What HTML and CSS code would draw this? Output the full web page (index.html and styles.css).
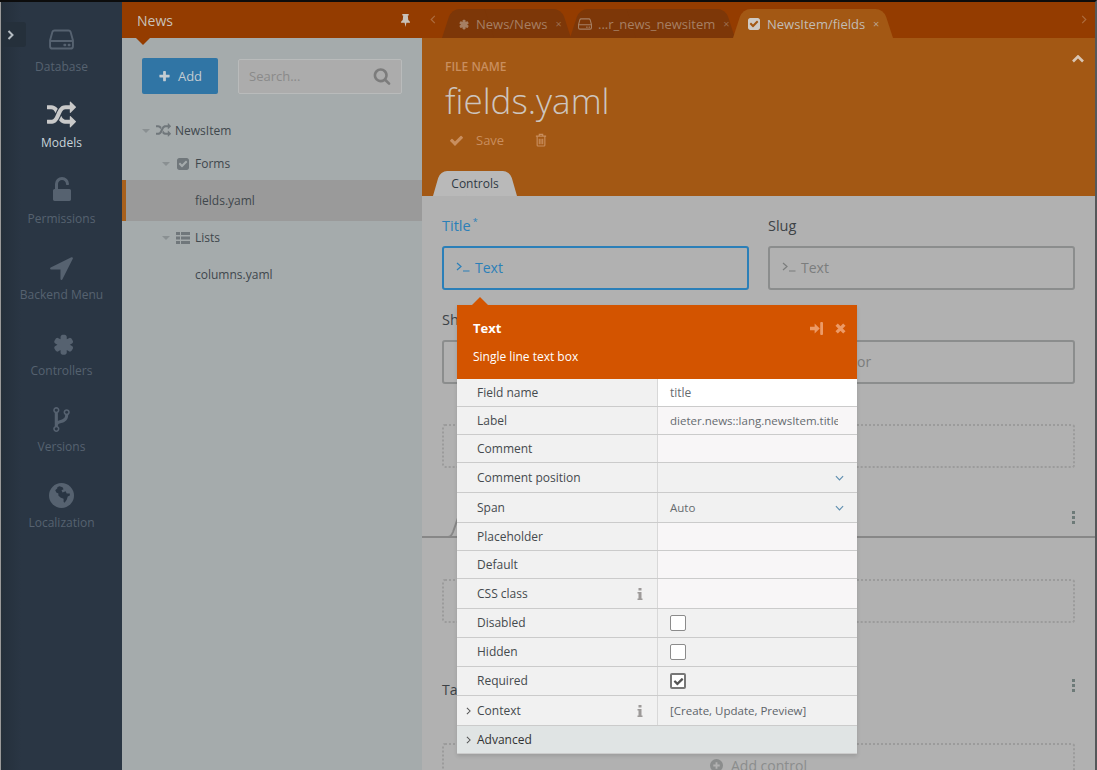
FILE: index.html
```html
<!DOCTYPE HTML>
<html>
<head>
  <meta charset="UTF-8">
  <title>Builder</title>
  <link rel="stylesheet" href="styles.css">
</head>
<body>
<svg class="defs" width="0" height="0">
  <symbol id="i-shuffle" viewBox="0 0 1792 1792"><path d="M666 481q-60 92-137 273-22-45-37-72.5t-40.5-63.5-51-56.5-63-35-81.5-14.5h-224q-14 0-23-9t-9-23v-192q0-14 9-23t23-9h224q250 0 410 225zm1126 799q0 14-9 23l-320 320q-9 9-23 9-13 0-22.5-9.5t-9.5-22.5v-192q-32 0-85 .5t-81 1-73-1-71-5-64-10.5-63-18.5-58-28.5-59-40-55-53.5-56-69.5q59-93 136-273 22 45 37 72.5t40.5 63.5 51 56.5 63 35 81.5 14.5h256v-192q0-14 9-23t23-9q12 0 24 10l319 319q9 9 9 23zm0-896q0 14-9 23l-320 320q-9 9-23 9-13 0-22.5-9.5t-9.5-22.5v-192h-256q-48 0-87 15t-69 45-51 61-45 77q-32 62-78 171-29 66-49.5 111t-54 105-64 100-74 83-90 68.5-106.5 42-128 16.5h-224q-14 0-23-9t-9-23v-192q0-14 9-23t23-9h224q48 0 87-15t69-45 51-61 45-77q32-62 78-171 29-66 49.5-111t54-105 64-100 74-83 90-68.5 106.5-42 128-16.5h256v-192q0-14 9-23t23-9q12 0 24 10l319 319q9 9 9 23z"/></symbol>
  <symbol id="i-checkbox" viewBox="0 0 1792 1792"><path d="M813 1299l614-614q19-19 19-45t-19-45l-102-102q-19-19-45-19t-45 19l-467 467-211-211q-19-19-45-19t-45 19l-102 102q-19 19-19 45t19 45l358 358q19 19 45 19t45-19zm851-883v960q0 119-84.5 203.5t-203.5 84.5h-960q-119 0-203.5-84.5t-84.5-203.5v-960q0-119 84.5-203.5t203.5-84.5h960q119 0 203.5 84.5t84.5 203.5z"/></symbol>
  <symbol id="i-check" viewBox="0 0 1792 1792"><path d="M1671 566q0 40-28 68l-724 724-136 136q-28 28-68 28t-68-28l-136-136-362-362q-28-28-28-68t28-68l136-136q28-28 68-28t68 28l294 295 656-657q28-28 68-28t68 28l136 136q28 28 28 68z"/></symbol>
  <symbol id="i-search" viewBox="0 0 1792 1792"><path d="M1216 832q0-185-131.5-316.5t-316.5-131.5-316.5 131.5-131.5 316.5 131.5 316.5 316.5 131.5 316.5-131.5 131.5-316.5zm512 832q0 52-38 90t-90 38q-54 0-90-38l-343-342q-179 124-399 124-143 0-273.5-55.5t-225-150-150-225-55.5-273.5 55.5-273.5 150-225 225-150 273.5-55.5 273.5 55.5 225 150 150 225 55.5 273.5q0 220-124 399l343 343q37 37 37 90z"/></symbol>
  <symbol id="i-plus" viewBox="0 0 1792 1792"><path d="M1600 736v192q0 40-28 68t-68 28h-416v416q0 40-28 68t-68 28h-192q-40 0-68-28t-28-68v-416h-416q-40 0-68-28t-28-68v-192q0-40 28-68t68-28h416v-416q0-40 28-68t68-28h192q40 0 68 28t28 68v416h416q40 0 68 28t28 68z"/></symbol>
  <symbol id="i-asterisk" viewBox="0 0 1792 1792"><path d="M1546 1050q46 26 59.5 77.5t-12.5 97.5l-64 110q-26 46-77.5 59.5t-97.5-12.5l-133-77v154q0 52-38 90t-90 38h-128q-52 0-90-38t-38-90v-154l-133 77q-46 26-97.5 12.5t-77.5-59.5l-64-110q-26-46-12.5-97.5t59.5-77.5l133-77-133-77q-46-26-59.5-77.5t12.5-97.5l64-110q26-46 77.5-59.5t97.5 12.5l133 77v-154q0-52 38-90t90-38h128q52 0 90 38t38 90v154l133-77q46-26 97.5-12.5t77.5 59.5l64 110q26 46 12.5 97.5t-59.5 77.5l-133 77z"/></symbol>
  <symbol id="i-arrow" viewBox="0 0 1792 1792"><path d="M1593 349l-640 1280q-17 35-57 35-5 0-15-2-22-5-35.5-22.5t-13.5-39.5v-576h-576q-22 0-39.5-13.5t-22.5-35.5 4-42 29-30l1280-640q13-7 29-7 27 0 45 19 15 14 18.5 34.5t-6.5 39.5z"/></symbol>
  <symbol id="i-unlock" viewBox="0 0 1792 1792"><path d="M1376 768q40 0 68 28t28 68v576q0 40-28 68t-68 28h-960q-40 0-68-28t-28-68v-576q0-40 28-68t68-28h32v-320q0-185 131.5-316.5t316.5-131.5 316.5 131.5 131.5 316.5q0 26-19 45t-45 19h-64q-26 0-45-19t-19-45q0-106-75-181t-181-75-181 75-75 181v320h736z"/></symbol>
  <symbol id="i-fork" viewBox="0 0 1792 1792"><path d="M672 1472q0-40-28-68t-68-28-68 28-28 68 28 68 68 28 68-28 28-68zm0-1152q0-40-28-68t-68-28-68 28-28 68 28 68 68 28 68-28 28-68zm640 128q0-40-28-68t-68-28-68 28-28 68 28 68 68 28 68-28 28-68zm96 0q0 52-26 96.500t-70 69.500q-2 287-226 414-67 38-203 81-128 40-169.500 71t-41.500 100v26q44 25 70 69.500t26 96.500q0 80-56 136t-136 56-136-56-56-136q0-52 26-96.500t70-69.500v-820q-44-25-70-69.500t-26-96.500q0-80 56-136t136-56 136 56 56 136q0 52-26 96.500t-70 69.500v497q54-26 154-57 55-17 87.500-29.500t70.500-31 59-39.500 40.500-51 28-69.500 8.500-91.500q-44-25-70-69.500t-26-96.500q0-80 56-136t136-56 136 56 56 136z"/></symbol>
  <symbol id="i-hdd" viewBox="0 0 26 22"><path d="M5.500 1.500h15q1.400 0 2 1.500l2.500 9v6q0 2.500-2.500 2.500h-19q-2.500 0-2.500-2.500v-6l2.500-9q.6-1.500 2-1.500zM1.500 12.500h23" fill="none" stroke="currentColor" stroke-width="2"/><rect x="15" y="15.500" width="3" height="2.500" rx="1"/><rect x="19.500" y="15.500" width="3" height="2.500" rx="1"/></symbol>
  <symbol id="i-globe" viewBox="0 0 24 24"><circle cx="12" cy="12" r="12"/><path class="globe-land" d="M8 4l2-1 3 1 1 2-2 1 1 2 3-1 1 2 3 0 0 2-2 1-1 3-2 3-1-1 0-3-3-1-2-2 0-2-2-1-1-2 2-2z"/></symbol>
  <symbol id="i-trash" viewBox="0 0 14 16"><path d="M1 3.500h12M5 3V1.500h4V3M2.500 4v10q0 1 1 1h7q1 0 1-1V4M5 6.500V13M7 6.500V13M9 6.500V13" fill="none" stroke="currentColor" stroke-width="1.300"/></symbol>
  <symbol id="i-pin" viewBox="0 0 12 14"><path d="M2.500 0h7v1.500H8.500L9 6.500q2 1 2 3H7L6 14 5 9.500H1q0-2 2-3l.5-5h-1z"/></symbol>
  <symbol id="i-list" viewBox="0 0 14 12"><path d="M0 0h4v3H0zM5 0h9v3H5zM0 4.500h4v3H0zM5 4.500h9v3H5zM0 9h4v3H0zM5 9h9v3H5z"/></symbol>
  <symbol id="i-prompt" viewBox="0 0 14 10"><path d="M1 1l4 3.500-4 3.500M7 9h6.500" fill="none" stroke="currentColor" stroke-width="1.200"/></symbol>
  <symbol id="i-signin" viewBox="0 0 14 14"><path d="M0 5h5V1.500L10.500 7 5 12.500V9H0z"/><rect x="11" y="0" width="3" height="14" rx="1"/></symbol>
  <symbol id="i-close" viewBox="0 0 10 10"><path d="M1.500 1.500l7 7M8.500 1.500l-7 7" fill="none" stroke="currentColor" stroke-width="3"/></symbol>
  <symbol id="i-info" viewBox="0 0 6 12"><path d="M1.500 0h3v2.500h-3zM.5 4h4v6.500h1V12H.5v-1.500h1V5.500h-1z"/></symbol>
  <symbol id="i-right" viewBox="0 0 6 10"><path d="M1 1l4 4-4 4" fill="none" stroke="currentColor"/></symbol>
  <symbol id="i-down" viewBox="0 0 10 6"><path d="M1 1l4 4 4-4" fill="none" stroke="currentColor"/></symbol>
  <symbol id="i-up" viewBox="0 0 12 8"><path d="M1 6.500l5-5 5 5" fill="none" stroke="currentColor" stroke-width="2.600"/></symbol>
  <symbol id="i-addcircle" viewBox="0 0 14 14"><path fill-rule="evenodd" d="M7 0a7 7 0 1 0 0 14A7 7 0 0 0 7 0zM6 3.500h2V6h2.500v2H8v2.500H6V8H3.500V6H6z"/></symbol>
</svg>

<div class="app">
  <nav class="sidebar">
    <button class="side-toggle"><svg class="ic"><use href="#i-right"/></svg></button>
    <a class="nav-item"><span class="nav-icon"><svg class="ic hdd"><use href="#i-hdd"/></svg></span>Database</a>
    <a class="nav-item active"><span class="nav-icon"><svg class="ic big"><use href="#i-shuffle"/></svg></span>Models</a>
    <a class="nav-item"><span class="nav-icon"><svg class="ic lock"><use href="#i-unlock"/></svg></span>Permissions</a>
    <a class="nav-item"><span class="nav-icon"><svg class="ic big"><use href="#i-arrow"/></svg></span>Backend Menu</a>
    <a class="nav-item"><span class="nav-icon"><svg class="ic big"><use href="#i-asterisk"/></svg></span>Controllers</a>
    <a class="nav-item"><span class="nav-icon"><svg class="ic big"><use href="#i-fork"/></svg></span>Versions</a>
    <a class="nav-item"><span class="nav-icon"><svg class="ic globe"><use href="#i-globe"/></svg></span>Localization</a>
  </nav>

  <aside class="panel">
    <header class="panel-head">
      <span>News</span>
      <svg class="ic pin"><use href="#i-pin"/></svg>
    </header>
    <div class="panel-tools">
      <button class="btn-add"><svg class="ic plus"><use href="#i-plus"/></svg>Add</button>
      <div class="search"><span>Search...</span><svg class="ic mag"><use href="#i-search"/></svg></div>
    </div>
    <ul class="tree">
      <li class="node lvl1"><i class="caret"></i><svg class="ic tree-shuffle"><use href="#i-shuffle"/></svg>NewsItem</li>
      <li class="node lvl2"><i class="caret"></i><svg class="ic tree-box"><use href="#i-checkbox"/></svg>Forms</li>
      <li class="node leaf selected">fields.yaml</li>
      <li class="node lvl2"><i class="caret"></i><svg class="ic tree-list"><use href="#i-list"/></svg>Lists</li>
      <li class="node leaf">columns.yaml</li>
    </ul>
  </aside>

  <main class="main">
    <div class="tabbar">
      <svg class="ic tab-nav"><use href="#i-right"/></svg>
      <div class="tabs">
        <div class="tab tab-one"><svg class="ic tab-icon"><use href="#i-asterisk"/></svg>News/News<span class="tab-x">×</span></div>
        <div class="tab tab-two"><svg class="ic tab-hdd"><use href="#i-hdd"/></svg>...r_news_newsitem<span class="tab-x">×</span></div>
        <div class="tab tab-three current"><svg class="ic tab-icon"><use href="#i-checkbox"/></svg>NewsItem/fields<span class="tab-x">×</span></div>
      </div>
      <svg class="ic tab-nav next"><use href="#i-right"/></svg>
    </div>

    <section class="file-head">
      <div class="file-top">
        <div>
          <div class="file-label">FILE NAME</div>
          <div class="file-name">fields.yaml</div>
        </div>
        <svg class="ic collapse"><use href="#i-up"/></svg>
      </div>
      <div class="file-actions">
        <span class="save"><svg class="ic act-check"><use href="#i-check"/></svg>Save</span>
        <svg class="ic act-trash"><use href="#i-trash"/></svg>
      </div>
      <div class="file-tab">Controls</div>
    </section>

    <section class="form">
      <div class="field-row">
        <div class="field">
          <label class="active">Title<sup>*</sup></label>
          <div class="control active"><svg class="ic prompt"><use href="#i-prompt"/></svg>Text</div>
        </div>
        <div class="field">
          <label>Slug</label>
          <div class="control"><svg class="ic prompt"><use href="#i-prompt"/></svg>Text</div>
        </div>
      </div>
      <div class="field-row second">
        <div class="field">
          <label>Sh</label>
          <div class="control"></div>
        </div>
        <div class="field">
          <label>&nbsp;</label>
          <div class="control"><svg class="ic prompt"><use href="#i-prompt"/></svg>Rich editor</div>
        </div>
      </div>
      <div class="dropzone first"></div>
      <div class="tabline">
        <svg class="curve" width="14" height="24" viewBox="0 0 14 24"><path d="M0 23h3q3 0 5-5L14 1" fill="none" stroke="#878787" stroke-width="2"/></svg>
        <span class="dots"><i></i><i></i><i></i></span>
      </div>
      <div class="dropzone second"></div>
      <div class="tab-label-row"><span class="tab-label">Ta</span><span class="dots"><i></i><i></i><i></i></span></div>
      <div class="dropzone last"><svg class="ic add-ic"><use href="#i-addcircle"/></svg>Add control</div>
    </section>
  </main>
</div>

<div class="popup">
  <div class="popup-head">
    <div class="popup-title">
      <b>Text</b>
      <span class="popup-icons"><svg class="ic signin"><use href="#i-signin"/></svg><svg class="ic pop-x"><use href="#i-close"/></svg></span>
    </div>
    <p>Single line text box</p>
  </div>
  <div class="row"><div class="key">Field name</div><div class="val focus">title</div></div>
  <div class="row"><div class="key">Label</div><div class="val"><span class="clip">dieter.news::lang.newsItem.title</span></div></div>
  <div class="row"><div class="key">Comment</div><div class="val"></div></div>
  <div class="row h30"><div class="key">Comment position</div><div class="val sel"><span></span><svg class="ic down"><use href="#i-down"/></svg></div></div>
  <div class="row h30"><div class="key">Span</div><div class="val sel"><span>Auto</span><svg class="ic down"><use href="#i-down"/></svg></div></div>
  <div class="row"><div class="key">Placeholder</div><div class="val"></div></div>
  <div class="row"><div class="key">Default</div><div class="val"></div></div>
  <div class="row h30"><div class="key">CSS class<svg class="ic info"><use href="#i-info"/></svg></div><div class="val"></div></div>
  <div class="row h29"><div class="key">Disabled</div><div class="val sel"><i class="box"></i></div></div>
  <div class="row h29"><div class="key">Hidden</div><div class="val sel"><i class="box"></i></div></div>
  <div class="row h29"><div class="key">Required</div><div class="val sel"><i class="box on"><svg class="ic"><use href="#i-check"/></svg></i></div></div>
  <div class="row h30"><div class="key"><svg class="ic expand"><use href="#i-right"/></svg>Context<svg class="ic info"><use href="#i-info"/></svg></div><div class="val sel ctx">[Create, Update, Preview]</div></div>
  <div class="row group"><div class="key"><svg class="ic expand"><use href="#i-right"/></svg>Advanced</div></div>
</div>
</body>
</html>
```

FILE: styles.css
```css
* { box-sizing: border-box; }
html, body { margin: 0; height: 100%; overflow: hidden; }
body { font-family: "Open Sans", sans-serif; font-size: 12px; color: #3d4246; background: #b1b1b1; }
ul { list-style: none; margin: 0; padding: 0; }
.defs { position: absolute; }
.ic { fill: currentColor; display: inline-block; flex: none; stroke-width: 1.300; }
.globe-land { fill: #293543; }

.app { display: flex; height: 770px; border-top: 2px solid #0c0c0c; border-right: 2px solid #55585a; }

/* left nav */
.sidebar { position: relative; width: 122px; flex: none; padding-top: 20px; background: linear-gradient(90deg, #263039 1px, #25303c 2px, #2a3644 20px); border-left: 1px solid #9a9a9a; text-align: center; color: #566270; }
.side-toggle { position: absolute; left: 1px; top: 20px; width: 24px; height: 25px; padding: 0 8px 0 0; border: 0; border-radius: 0 3px 3px 0; background: #25303b; color: #b5bcc2; display: flex; align-items: center; justify-content: center; }
.side-toggle .ic { width: 7px; height: 10px; stroke-width: 2; }
.nav-item { display: block; height: 76px; line-height: 18px; font-size: 12px; }
.nav-item.active { color: #c7d3d9; }
.nav-item.active .nav-icon { color: #c9c9c9; }
.nav-icon { display: flex; height: 34px; margin-bottom: 2px; align-items: center; justify-content: center; }
.ic.hdd { width: 25px; height: 21px; }
.ic.big { width: 29px; height: 29px; }
.ic.lock { width: 28px; height: 28px; }
.ic.globe { width: 25px; height: 25px; }

/* tree panel */
.panel { width: 300px; flex: none; background: #a5abac; color: #3e454a; }
.panel-head { height: 36px; background: #943c00; color: #c9c2ba; font-size: 14px; padding: 0 11px 0 15px; display: flex; align-items: center; justify-content: space-between; position: relative; }
.panel-head::after { content: ""; position: absolute; left: 14px; top: 36px; border: 7px solid transparent; border-top-color: #943c00; border-bottom: 0; }
.ic.pin { width: 11px; height: 13px; }
.panel-tools { display: flex; gap: 20px; padding: 20px 20px 0; }
.btn-add { width: 76px; height: 36px; border: 0; border-radius: 2px; background: #3075a5; color: #c3ccd2; font: 13px "Open Sans", sans-serif; display: flex; align-items: center; justify-content: center; gap: 7px; padding: 0; }
.ic.plus { width: 13px; height: 13px; }
.search { width: 164px; height: 35px; margin-top: 1px; border: 1px solid #b9bbbb; border-radius: 2px; background: #acacac; color: #8a8a8a; font-size: 13px; display: flex; align-items: center; justify-content: space-between; padding: 0 10px 2px; }
.ic.mag { width: 18px; height: 18px; color: #7c7c7c; }
.tree { margin-top: 20px; font-size: 12px; }
.node { display: flex; align-items: center; height: 33px; color: #40474c; }
.node.lvl1 { padding-left: 20px; }
.node.lvl2 { padding-left: 40px; }
.node.leaf { padding-left: 73px; height: 40px; }
.node.selected { height: 41px; background: #9a9a9a; border-left: 4px solid #a8601c; padding-left: 69px; }
.caret { width: 8px; height: 0; border: 4px solid transparent; border-top: 4px solid #8a9092; border-bottom: 0; margin-right: 6px; }
.node .ic { color: #70777b; margin-right: 5px; }
.node .ic.tree-shuffle { width: 15px; height: 15px; margin-right: 4px; }
.ic.tree-box { width: 14px; height: 14px; }
.ic.tree-list { width: 14px; height: 12px; }

/* main column */
.main { flex: 1; min-width: 0; overflow: hidden; background: #b1b1b1; }
.tabbar { height: 36px; background: #943c00; display: flex; position: relative; padding-left: 20px; }
.tab-nav { position: absolute; left: 8px; top: 13px; width: 6px; height: 9px; color: #ad6c3d; transform: scaleX(-1); }
.tab-nav.next { left: auto; right: 8px; transform: none; }
.tabs { display: flex; align-items: flex-end; height: 36px; padding-top: 7px; }
.tab { position: relative; z-index: 0; height: 29px; display: flex; align-items: center; font-size: 13px; color: #a67f63; white-space: nowrap; }
.tab::before, .tab::after { content: ""; position: absolute; z-index: -1; top: 0; bottom: 0; width: 60%; background: #7d3708; }
.tab::before { left: 0; transform: skewX(-18deg); transform-origin: bottom left; border-radius: 8px 0 0 0; }
.tab::after { right: 0; transform: skewX(18deg); transform-origin: bottom right; border-radius: 0 8px 0 0; }
.tab.current { color: #c2bcb4; }
.tab.current::before, .tab.current::after { background: #a35814; }
.tab-one { width: 129px; padding-left: 14px; }
.tab-two { width: 165px; padding-left: 8px; margin-left: -1px; }
.tab-three { width: 160px; padding-left: 14px; margin-left: -2px; }
.tab-icon { width: 14px; height: 14px; margin-right: 6px; color: #a67f63; }
.current .tab-icon { color: #cfcac5; }
.tab-hdd { width: 14px; height: 12px; margin-right: 6px; }
.tab-x { margin-left: 8px; font-size: 11px; opacity: .75; }

.file-head { height: 158px; background: #a35814; color: #c98e5e; padding: 20px 0 0 23px; display: flex; flex-direction: column; }
.file-top { display: flex; justify-content: space-between; padding-right: 11px; }
.file-label { font-size: 12px; font-weight: 600; line-height: 17px; }
.file-name { font-size: 35px; font-weight: 300; line-height: 50px; color: #cdc5bf; margin-top: 1px; }
.ic.collapse { width: 12px; height: 8px; margin-top: -3px; color: #d9c6b4; }
.file-actions { display: flex; align-items: center; gap: 31px; height: 20px; margin-top: 4px; font-size: 13px; }
.save { display: flex; align-items: center; gap: 12px; margin-left: 4px; }
.ic.act-check { width: 15px; height: 15px; }
.ic.act-trash { width: 12px; height: 14px; }
.file-tab { position: relative; z-index: 0; margin: auto 0 0 -12px; width: 84px; height: 25px; color: #2f3a44; line-height: 25px; text-align: center; font-size: 12px; }
.file-tab::before, .file-tab::after { content: ""; position: absolute; z-index: -1; top: 0; bottom: 0; width: 60%; background: #b9b9b9; }
.file-tab::before { left: 0; transform: skewX(-16deg); transform-origin: bottom left; border-radius: 7px 0 0 0; }
.file-tab::after { right: 0; transform: skewX(16deg); transform-origin: bottom right; border-radius: 0 7px 0 0; }

/* form behind the popup */
.form { padding: 20px 20px 0; }
.field-row { display: grid; grid-template-columns: 307px 307px; column-gap: 19px; }
.field-row.second { margin-top: 20px; }
.field label { display: block; height: 30px; line-height: 20px; font-size: 14.500px; color: #3d4246; }
.field label.active { color: #2b7fb8; }
.field sup { font-size: 9px; line-height: 0; margin-left: 2px; }
.control { height: 44px; border: 2px solid #8b8d8d; border-radius: 3px; color: #7b7d7d; font-size: 14px; display: flex; align-items: center; padding: 0 0 2px 12px; gap: 5px; }
.control.active { border-color: #2b7fb8; color: #2b7fb8; }
.ic.prompt { width: 14px; height: 10px; }
.dropzone { border: 2px dotted #9b9b9b; border-radius: 3px; height: 44px; }
.dropzone.first { margin-top: 40px; }
.tabline { height: 70px; margin: 0 -20px; border-bottom: 2px solid #878787; position: relative; display: flex; align-items: flex-end; justify-content: flex-end; padding: 0 20px 12px 0; }
.curve { position: absolute; left: 23px; bottom: -2px; }
.dots { display: flex; flex-direction: column; gap: 2px; }
.dots i { width: 3px; height: 3px; background: #6d7a78; }
.dropzone.second { margin-top: 41px; }
.tab-label-row { display: flex; justify-content: space-between; height: 120px; padding-top: 56px; }
.tab-label { margin-top: 2px; font-size: 14px; line-height: 18px; }
.dropzone.last { color: #8b8d8d; font-size: 14px; display: flex; align-items: center; justify-content: center; gap: 8px; }
.add-ic { width: 13px; height: 13px; }

/* popup */
.popup { position: absolute; left: 457px; top: 305px; width: 400px; background: #f1f1f1; box-shadow: 0 2px 4px rgba(0,0,0,.12); }
.popup::before { content: ""; position: absolute; left: 15px; top: -8px; border: 8px solid transparent; border-bottom-color: #d35400; border-top: 0; }
.popup-head { height: 74px; background: #d35400; color: #fff; padding: 14px 11px 0 16px; }
.popup-title { display: flex; justify-content: space-between; align-items: center; height: 18px; font-size: 13px; }
.popup-title b { font-weight: 700; }
.popup-icons { display: flex; gap: 12px; align-items: center; color: #ec9a66; }
.ic.signin { width: 13px; height: 13px; }
.ic.pop-x { width: 11px; height: 11px; }
.popup-head p { margin: 11px 0 0; font-size: 12px; line-height: 18px; }
.row { display: grid; grid-template-columns: 201px 1fr; height: 28px; border-bottom: 1px solid #cbcbcb; color: #454a4e; }
.row.h29 { height: 29px; }
.row.h30 { height: 30px; }
.row.h29 .key { padding-bottom: 2px; }
.key { position: relative; padding-left: 20px; display: flex; align-items: center; border-right: 1px solid #d8d8d8; }
.val { background: #f8f6f7; padding: 0 12px; display: flex; align-items: center; color: #666b6f; font-size: 11.500px; }
.val.focus { background: #fff; font-size: 12px; }
.val.sel { background: #f1f1f1; justify-content: space-between; }
.clip { display: block; width: 168px; overflow: hidden; white-space: nowrap; }
.ic.down { width: 9px; height: 6px; color: #5f8fb0; margin-right: 1px; }
.ic.info { position: absolute; right: 14px; top: 50%; margin-top: -6px; width: 6px; height: 12px; color: #9d9a99; }
.ic.expand { position: absolute; left: 9px; top: 50%; margin-top: -4px; width: 5px; height: 8px; color: #555; }
.box { width: 16px; height: 16px; background: #fff; border: 1px solid #8b8b8b; border-radius: 2px; display: flex; align-items: center; justify-content: center; }
.box.on { border-width: 2px; border-color: #777; color: #555; }
.box.on .ic { width: 11px; height: 11px; }
.val.ctx { color: #5d6469; }
.row.group { background: #e0e4e4; display: block; }
.row.group .key { height: 100%; border: 0; color: #333; }
```
